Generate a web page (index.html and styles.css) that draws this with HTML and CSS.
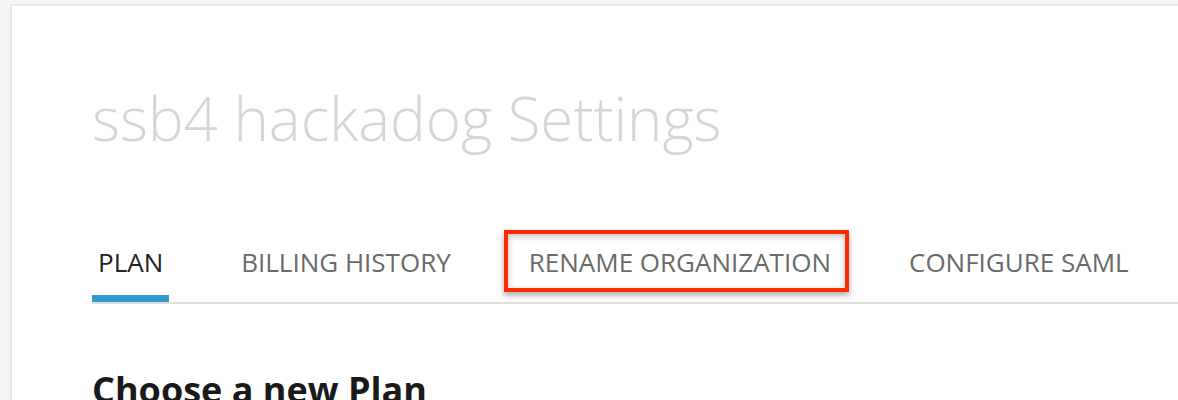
FILE: index.html
```html
<!DOCTYPE html>
<html>
<head>
<meta charset="utf-8">
<link rel="stylesheet" href="styles.css">
</head>
<body>
<div class="card">
  <h1 class="title">ssb4 hackadog Settings</h1>
  <nav class="tabs">
    <a class="tab active">PLAN</a>
    <a class="tab">BILLING HISTORY</a>
    <a class="tab highlight">RENAME ORGANIZATION</a>
    <a class="tab">CONFIGURE SAML</a>
  </nav>
  <h2 class="section">Choose a new Plan</h2>
</div>
</body>
</html>
```
FILE: styles.css
```css
html, body {
  margin: 0;
  padding: 0;
  background: #f5f5f5;
  font-family: "Open Sans", "Liberation Sans", sans-serif;
  overflow: hidden;
}
.card {
  margin: 4px 0 0 10px;
  width: 1250px;
  height: 420px;
  background: #fff;
  border: 2px solid #e8e8e8;
  padding: 0 0 0 80px;
  box-sizing: border-box;
}
.title {
  margin: 0;
  padding-top: 72px;
  font-size: 60px;
  font-weight: 300;
  line-height: 80px;
  color: #d9d4d4;
}
.tabs {
  margin-top: 86px;
  display: flex;
  gap: 66px;
  border-bottom: 2px solid #dedede;
  width: 1200px;
}
.tab {
  position: relative;
  display: block;
  padding: 0 6px;
  font-size: 26px;
  line-height: 36px;
  height: 58px;
  color: #6a6a6a;
  box-sizing: border-box;
  border-bottom: 7px solid transparent;
}
.tab.active {
  color: #222;
  border-bottom-color: #3399cc;
}
.tab.highlight::after {
  content: "";
  position: absolute;
  left: -19px;
  right: -12px;
  top: -14px;
  bottom: 3px;
  border: 4px solid #ff2a00;
  box-shadow: 0 3px 6px rgba(0,0,0,0.35), inset 0 2px 6px rgba(0,0,0,0.25);
}
.section {
  margin: 61px 0 0 0;
  font-size: 36px;
  font-weight: 700;
  color: #1a1a1a;
}
```
